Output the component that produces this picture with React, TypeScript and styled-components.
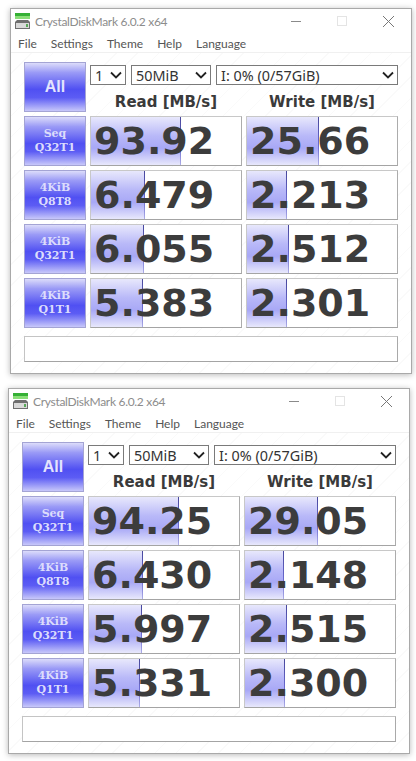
import * as React from 'react'
import styled, { createGlobalStyle } from 'styled-components'

const GlobalStyle = createGlobalStyle`
  html, body {
    margin: 0;
    padding: 0;
    background: #fff;
  }
  body {
    width: 416px;
    height: 761px;
    overflow: hidden;
    font-family: "Noto Sans", "Open Sans", sans-serif;
  }
`

const Page = styled.div`
  display: flex;
  flex-direction: column;
  gap: 14px;
  padding-top: 8px;
`

const Window = styled.section<{ $left: number }>`
  width: 402px;
  height: 366px;
  margin-left: ${(p) => p.$left}px;
  box-sizing: border-box;
  border: 1px solid #a9a9a9;
  background: #fff;
  box-shadow: 0 1px 6px rgba(0, 0, 0, 0.28);
  display: flex;
  flex-direction: column;
`

const TitleBar = styled.header`
  height: 24px;
  display: flex;
  align-items: center;
  padding-left: 3px;
`

const TitleText = styled.span`
  margin-left: 4px;
  flex: 1;
  font-family: Lato, sans-serif;
  font-size: 12px;
  letter-spacing: -0.3px;
  color: #8c8c8c;
`

const WindowButton = styled.span`
  width: 46px;
  height: 24px;
  display: flex;
  align-items: center;
  justify-content: center;
`

const MenuBar = styled.nav`
  height: 19px;
  display: flex;
  align-items: center;
  gap: 14px;
  padding: 2px 0 0 7px;
  box-sizing: border-box;
  font-family: Lato, sans-serif;
  font-size: 12px;
  color: #555;
`

const MenuRule = styled.div`
  height: 1px;
  background: #f0f0f0;
`

const Panel = styled.div`
  flex: 1;
  padding: 9px 13px 0;
  display: grid;
  grid-template-columns: 62px 152px 152px;
  column-gap: 4px;
  grid-template-rows: repeat(5, 50px) 30px;
  row-gap: 4px;
  background: repeating-linear-gradient(135deg, #fff 0 14px, #fafafa 14px 15px);
`

const BlueButton = styled.div`
  box-sizing: border-box;
  border: 1px solid #a4a4d4;
  background: linear-gradient(#dcdcfa 0%, #9a9af6 20%, #5050f2 55%, #5c5cf4 72%, #c8c8fa 100%);
  color: #dcdcfc;
  display: flex;
  flex-direction: column;
  align-items: center;
  justify-content: center;
  font-family: "DejaVu Serif", serif;
  font-weight: 700;
  font-size: 11px;
  line-height: 14px;
`

const AllButton = styled(BlueButton)`
  font-family: "Liberation Sans", sans-serif;
  font-size: 16px;
  color: #e4e4fd;
`

const Controls = styled.div`
  grid-column: 2 / 4;
  display: flex;
  flex-direction: column;
`

const SelectRow = styled.div`
  margin-top: 3px;
  display: flex;
  gap: 5px;
`

const FakeSelect = styled.div<{ $width: number }>`
  width: ${(p) => p.$width}px;
  height: 20px;
  box-sizing: border-box;
  border: 1px solid #7a7a7a;
  background: #fff;
  padding: 0 3px 0 4px;
  display: flex;
  align-items: center;
  justify-content: space-between;
  font-size: 14.4px;
  color: #333;
`

const Headers = styled.div`
  margin-top: 8px;
  display: grid;
  grid-template-columns: 152px 152px;
  column-gap: 4px;
`

const HeaderLabel = styled.div`
  text-align: center;
  font-family: "DejaVu Sans", sans-serif;
  font-weight: 700;
  font-size: 15px;
  line-height: 18px;
  color: #3a3a3a;
`

const Meter = styled.div`
  position: relative;
  box-sizing: border-box;
  border: 1px solid #c8c8c8;
  border-right-color: #acacac;
  border-bottom-color: #a4a4a4;
  background: #fff;
  overflow: hidden;
  display: flex;
  align-items: center;
  padding-left: 3px;
  font-family: "DejaVu Sans", sans-serif;
  font-weight: 700;
  font-size: 38px;
  color: #3c3c3c;
`

const MeterFill = styled.div`
  position: absolute;
  top: 0;
  bottom: 0;
  left: 0;
  border-right: 1px solid;
  border-image: linear-gradient(#46469a, #6a6ad0 60%, #b0b0e8) 1;
  background: linear-gradient(#e8e8fc 0%, #b8b8f8 40%, #a8a8f6 65%, #e8e8fc 100%);
`

const MeterValue = styled.span`
  position: relative;
`

const MessageBox = styled.div`
  grid-column: 1 / 4;
  margin-top: 4px;
  box-sizing: border-box;
  border: 1px solid #c4c4c4;
  border-right-color: #a9a9a9;
  border-bottom-color: #a4a4a4;
  background: #fff;
`

const DiskIcon = () => (
  <svg width="17" height="17" viewBox="0 0 17 17">
    <rect x="1" y="0" width="15" height="3" fill="#35b035" />
    <rect x="1" y="3" width="15" height="3" fill="#8ade78" />
    <path d="M1 9 L3 7 H14 L16 9 V16 H1 Z" fill="#6e6e6e" />
    <rect x="2" y="10" width="13" height="5" fill="#d8d8d8" />
    <rect x="12" y="11" width="2" height="3" fill="#58a858" />
  </svg>
)

const Chevron = () => (
  <svg width="12" height="8" viewBox="0 0 12 8">
    <path d="M1 1.5 L6 6.5 L11 1.5" fill="none" stroke="#222" strokeWidth="1.8" />
  </svg>
)

type Row = {
  top: string
  bottom: string
  read: string
  readBar: number
  write: string
  writeBar: number
}

type Result = {
  left: number
  rows: Row[]
}

const results: Result[] = [
  {
    left: 10,
    rows: [
      { top: 'Seq', bottom: 'Q32T1', read: '93.92', readBar: 89, write: '25.66', writeBar: 71 },
      { top: '4KiB', bottom: 'Q8T8', read: '6.479', readBar: 53, write: '2.213', writeBar: 39 },
      { top: '4KiB', bottom: 'Q32T1', read: '6.055', readBar: 52, write: '2.512', writeBar: 41 },
      { top: '4KiB', bottom: 'Q1T1', read: '5.383', readBar: 51, write: '2.301', writeBar: 39 },
    ],
  },
  {
    left: 8,
    rows: [
      { top: 'Seq', bottom: 'Q32T1', read: '94.25', readBar: 89, write: '29.05', writeBar: 72 },
      { top: '4KiB', bottom: 'Q8T8', read: '6.430', readBar: 53, write: '2.148', writeBar: 38 },
      { top: '4KiB', bottom: 'Q32T1', read: '5.997', readBar: 52, write: '2.515', writeBar: 41 },
      { top: '4KiB', bottom: 'Q1T1', read: '5.331', readBar: 50, write: '2.300', writeBar: 39 },
    ],
  },
]

const menus = ['File', 'Settings', 'Theme', 'Help', 'Language']

const BenchWindow = ({ result }: { result: Result }) => (
  <Window $left={result.left}>
    <TitleBar>
      <DiskIcon />
      <TitleText>CrystalDiskMark 6.0.2 x64</TitleText>
      <WindowButton>
        <svg width="10" height="10" viewBox="0 0 10 10"><path d="M0 5.5 H10" stroke="#8a8a8a" /></svg>
      </WindowButton>
      <WindowButton>
        <svg width="10" height="10" viewBox="0 0 10 10"><rect x="0.5" y="0.5" width="9" height="9" fill="none" stroke="#e4e4e4" /></svg>
      </WindowButton>
      <WindowButton>
        <svg width="11" height="11" viewBox="0 0 11 11"><path d="M0 0 L11 11 M11 0 L0 11" stroke="#777" /></svg>
      </WindowButton>
    </TitleBar>
    <MenuBar>
      {menus.map((m) => <span key={m}>{m}</span>)}
    </MenuBar>
    <MenuRule />
    <Panel>
      <AllButton>All</AllButton>
      <Controls>
        <SelectRow>
          <FakeSelect $width={36}>1<Chevron /></FakeSelect>
          <FakeSelect $width={80}>50MiB<Chevron /></FakeSelect>
          <FakeSelect $width={182}>I: 0% (0/57GiB)<Chevron /></FakeSelect>
        </SelectRow>
        <Headers>
          <HeaderLabel>Read [MB/s]</HeaderLabel>
          <HeaderLabel>Write [MB/s]</HeaderLabel>
        </Headers>
      </Controls>
      {result.rows.map((row) => (
        <React.Fragment key={row.read}>
          <BlueButton>
            <span>{row.top}</span>
            <span>{row.bottom}</span>
          </BlueButton>
          <Meter>
            <MeterFill style={{ width: row.readBar }} />
            <MeterValue>{row.read}</MeterValue>
          </Meter>
          <Meter>
            <MeterFill style={{ width: row.writeBar }} />
            <MeterValue>{row.write}</MeterValue>
          </Meter>
        </React.Fragment>
      ))}
      <MessageBox />
    </Panel>
  </Window>
)

export default function App() {
  return (
    <>
      <GlobalStyle />
      <Page>
        {results.map((r) => <BenchWindow key={r.left} result={r} />)}
      </Page>
    </>
  )
}
